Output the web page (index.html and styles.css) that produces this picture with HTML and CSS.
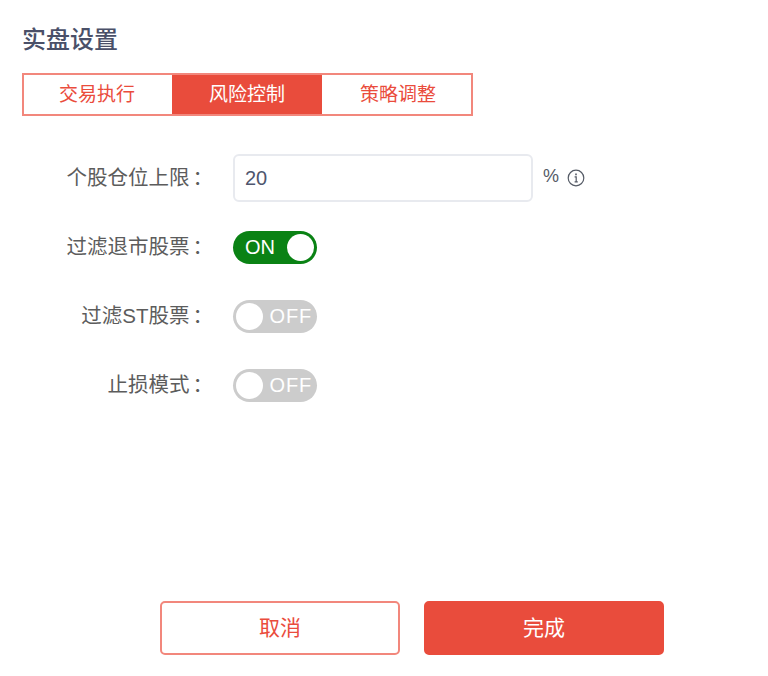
FILE: index.html
```html
<!DOCTYPE html>
<html lang="zh">
<head>
  <meta charset="UTF-8">
  <meta name="viewport" content="width=device-width, initial-scale=1.0">
  <title>实盘设置</title>
  <link rel="stylesheet" href="styles.css">
</head>
<body>
  <section class="panel">
    <h2 class="panel__title">实盘设置</h2>

    <div class="tabs">
      <a href="#" class="tabs__item">交易执行</a>
      <a href="#" class="tabs__item active">风险控制</a>
      <a href="#" class="tabs__item">策略调整</a>
    </div>

    <form class="form">
      <div class="form__row form__row--input">
        <label class="form__label">个股仓位上限<span class="colon">：</span></label>
        <input class="form__input" type="text" value="20">
        <span class="form__unit">%</span>
        <svg class="form__info" width="18" height="18" viewBox="0 0 18 18" fill="none" stroke="#555b66" stroke-width="1.2">
          <circle cx="9" cy="9" r="7.8"/>
          <path d="M7.6 7.9h1.6v4.7M7.6 12.8h3.2"/>
          <path d="M9 4.6v1.6" stroke-width="1.6"/>
        </svg>
      </div>
      <div class="form__row">
        <label class="form__label">过滤退市股票<span class="colon">：</span></label>
        <span class="switch on"><span class="switch__text">ON</span><span class="switch__knob"></span></span>
      </div>
      <div class="form__row">
        <label class="form__label">过滤ST股票<span class="colon">：</span></label>
        <span class="switch"><span class="switch__knob"></span><span class="switch__text">OFF</span></span>
      </div>
      <div class="form__row">
        <label class="form__label">止损模式<span class="colon">：</span></label>
        <span class="switch"><span class="switch__knob"></span><span class="switch__text">OFF</span></span>
      </div>
    </form>

    <div class="actions">
      <a href="#" class="btn">取消</a>
      <a href="#" class="btn btn--primary">完成</a>
    </div>
  </section>
</body>
</html>
```

FILE: styles.css
```css
/* reset */
* {
  margin: 0;
  padding: 0;
  box-sizing: border-box;
}
a {
  text-decoration: none;
}
body {
  background-color: #fff;
  font-family: "Liberation Sans", "Noto Sans CJK SC", sans-serif;
}

/* panel */
.panel {
  width: 768px;
  height: 676px;
  padding: 25px 0 0 22px;
}
.panel__title {
  font-size: 24px;
  font-weight: 500;
  line-height: 30px;
  color: #4a5068;
  margin-bottom: 18px;
}

/* tabs */
.tabs {
  display: grid;
  grid-template-columns: 148px 150px 1fr;
  width: 451px;
  height: 43px;
  border: 2px solid #f2877c;
}
.tabs__item {
  font-size: 19px;
  line-height: 39px;
  text-align: center;
  color: #ea4c3c;
}
.tabs__item:first-child {
  padding-right: 2px;
}
.tabs__item:last-child {
  padding-left: 3px;
}
.tabs__item.active {
  background-color: #e94c3c;
  color: #fff;
}

/* form */
.form {
  margin-top: 38px;
}
.form__row {
  display: flex;
  align-items: center;
  height: 34px;
  margin-bottom: 35px;
}
.form__row--input {
  height: 48px;
  margin-bottom: 28px;
}
.form__label {
  width: 191px;
  font-size: 20.5px;
  text-align: right;
  color: #5c5c5c;
  margin-right: 20px;
  padding-bottom: 4px;
  flex-shrink: 0;
}
.colon {
  margin-left: 3px;
}
.form__input {
  width: 300px;
  height: 48px;
  border: 2px solid #e8eaef;
  border-radius: 6px;
  padding: 0 10px;
  font-family: inherit;
  font-size: 20px;
  color: #4f566e;
  outline: none;
}
.form__unit {
  font-size: 18px;
  color: #555b66;
  margin: -4px 0 0 10px;
}
.form__info {
  margin-left: 8px;
}

/* switch */
.switch {
  display: flex;
  align-items: center;
  justify-content: space-between;
  width: 84px;
  height: 33px;
  border-radius: 17px;
  background-color: #ccc;
  padding: 0 2px 0 3px;
  font-size: 20px;
  letter-spacing: .8px;
  color: #fff;
}
.switch__knob {
  width: 27px;
  height: 27px;
  border-radius: 50%;
  background-color: #fff;
}
.switch__text {
  margin-right: 3px;
}
.switch.on {
  background-color: #0a8214;
  padding: 0 3px 0 12px;
  letter-spacing: 0;
}

/* actions */
.actions {
  display: flex;
  gap: 24px;
  margin: 199px 0 0 138px;
}
.btn {
  width: 240px;
  height: 54px;
  border: 2px solid #f2877c;
  border-radius: 5px;
  font-size: 21px;
  line-height: 50px;
  text-align: center;
  color: #ea4c3c;
}
.btn--primary {
  background-color: #e94c3c;
  border-color: #e94c3c;
  color: #fff;
}
```
